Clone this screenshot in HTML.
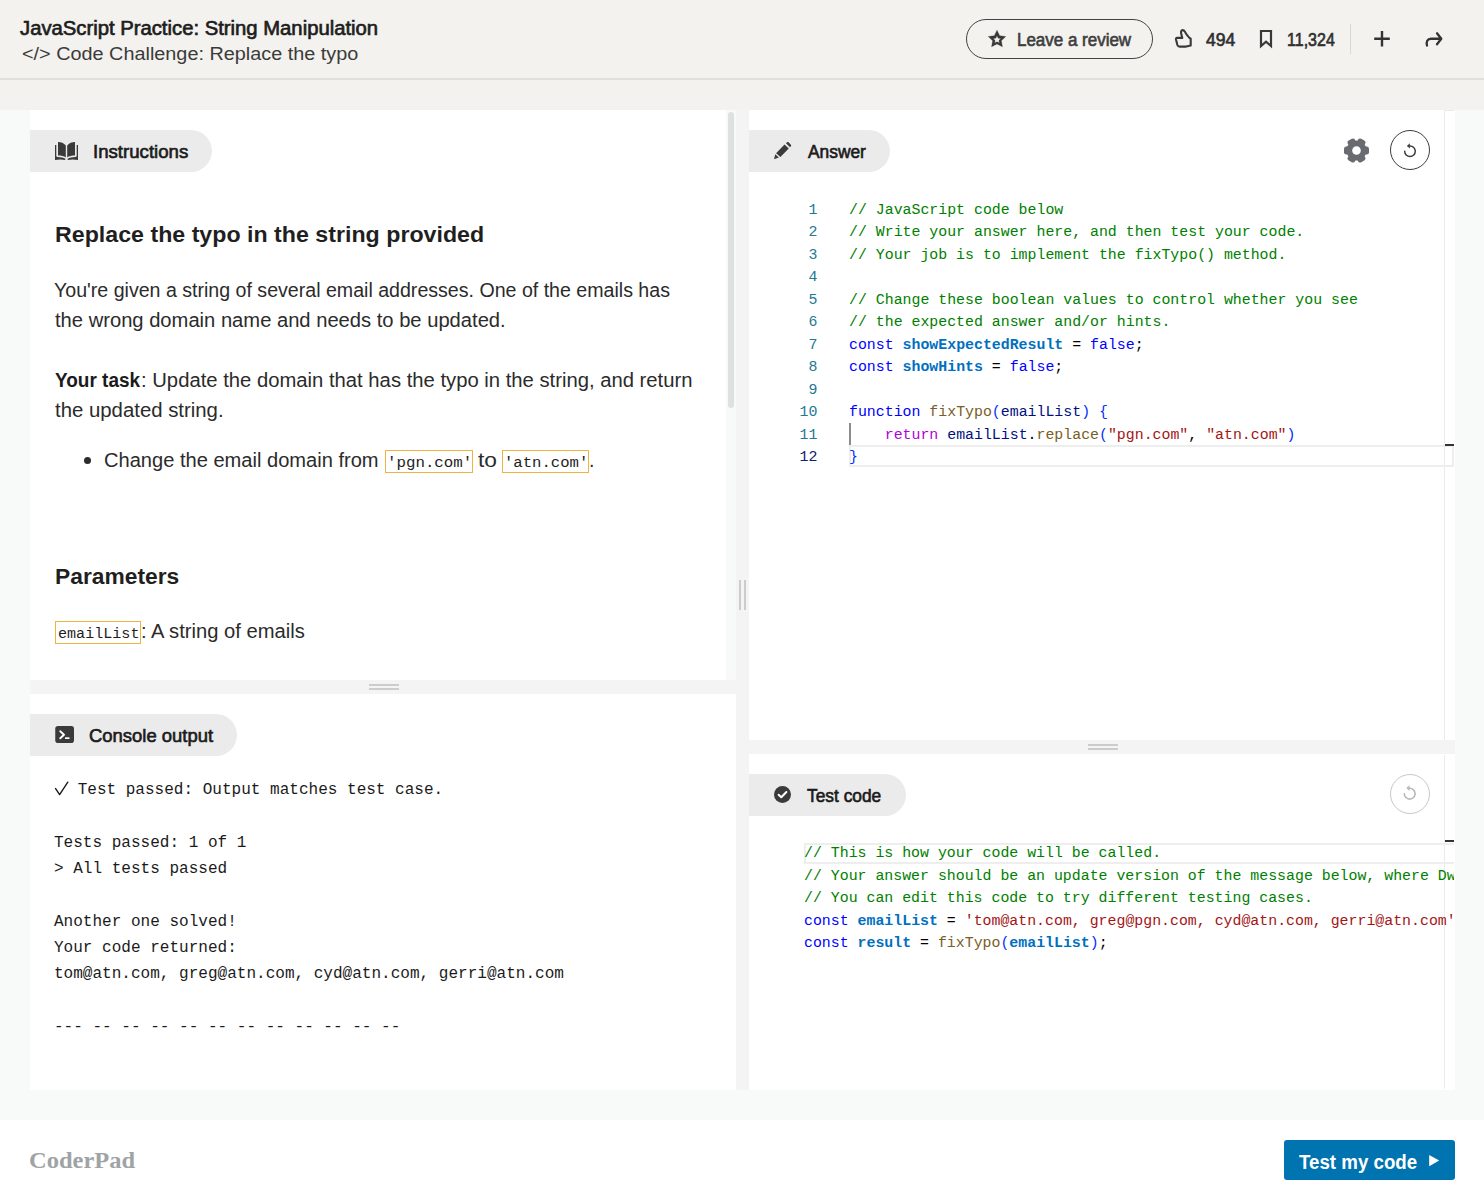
<!DOCTYPE html>
<html><head><meta charset="utf-8"><style>
html,body{margin:0;padding:0;width:1484px;height:1199px;overflow:hidden;background:#fff;}
body>div{position:absolute;}
.t{white-space:pre;}
</style></head><body>
<div style="left:0px;top:0px;width:1484px;height:110px;background:#f3f2ef;"></div>
<div style="left:0px;top:78px;width:1484px;height:2px;background:#e0dfdc;"></div>
<div style="left:0px;top:110px;width:1484px;height:1010px;background:#f8f9f9;"></div>
<div style="left:0px;top:1120px;width:1484px;height:79px;background:#ffffff;"></div>
<div style="left:30px;top:110px;width:696px;height:570px;background:#ffffff;"></div>
<div style="left:728px;top:112px;width:6px;height:296px;background:#dfe0e0;border-radius:3px;"></div>
<div style="left:30px;top:680px;width:706px;height:14px;background:#f4f4f4;"></div>
<div style="left:369px;top:684px;width:30px;height:2px;background:#cccccc;"></div>
<div style="left:369px;top:688px;width:30px;height:2px;background:#cccccc;"></div>
<div style="left:30px;top:694px;width:706px;height:396px;background:#ffffff;"></div>
<div style="left:736px;top:110px;width:13px;height:980px;background:#f4f4f4;"></div>
<div style="left:739px;top:580px;width:2px;height:30px;background:#cccccc;"></div>
<div style="left:744px;top:580px;width:2px;height:30px;background:#cccccc;"></div>
<div style="left:749px;top:110px;width:706px;height:630px;background:#ffffff;"></div>
<div style="left:1444px;top:110px;width:1px;height:630px;background:#ebebeb;"></div>
<div style="left:1444px;top:110px;width:10px;height:1px;background:#ebebeb;"></div>
<div style="left:749px;top:740px;width:706px;height:14px;background:#f4f4f4;"></div>
<div style="left:1088px;top:744px;width:30px;height:2px;background:#cccccc;"></div>
<div style="left:1088px;top:748px;width:30px;height:2px;background:#cccccc;"></div>
<div style="left:749px;top:754px;width:706px;height:336px;background:#ffffff;"></div>
<div style="left:1444px;top:755px;width:1px;height:334px;background:#ebebeb;"></div>
<div class="t" style="left:20.00px;top:17.35px;font-size:19.5px;line-height:23.40px;font-family:'Liberation Sans', sans-serif;font-weight:400;color:#1d1d1d;letter-spacing:0.000px;-webkit-text-stroke:0.65px currentColor;transform:scaleX(1.0390);transform-origin:0 0;">JavaScript Practice: String Manipulation</div>
<div class="t" style="left:21.67px;top:43.76px;font-size:17.5px;line-height:21.00px;font-family:'Liberation Sans', sans-serif;font-weight:400;color:#3b3b3a;letter-spacing:0.000px;transform:scaleX(1.1332);transform-origin:0 0;">&lt;/&gt; Code Challenge: Replace the typo</div>
<div style="left:966px;top:19px;width:187px;height:40px;background:transparent;border:1.25px solid #434343;border-radius:20px;box-sizing:border-box;"></div>
<svg style="position:absolute;left:982px;top:24px;" width="30" height="30" viewBox="0 0 30 30"><path d="M15.00,6.20 L17.70,11.68 L23.75,12.56 L19.37,16.82 L20.41,22.84 L15.00,20.00 L9.59,22.84 L10.63,16.82 L6.25,12.56 L12.30,11.68 Z M15.00,11.80 L16.18,14.18 L18.80,14.56 L16.90,16.42 L17.35,19.04 L15.00,17.80 L12.65,19.04 L13.10,16.42 L11.20,14.56 L13.82,14.18 Z" fill="#383838" fill-rule="evenodd" stroke="#383838" stroke-width="0.3" stroke-linejoin="round"/></svg>
<div class="t" style="left:1017.10px;top:29.03px;font-size:18.75px;line-height:22.50px;font-family:'Liberation Sans', sans-serif;font-weight:400;color:#3e3e3e;letter-spacing:0.000px;-webkit-text-stroke:0.65px currentColor;transform:scaleX(0.9048);transform-origin:0 0;">Leave a review</div>
<svg style="position:absolute;left:1170px;top:24px;" width="30" height="30" viewBox="0 0 30 30"><path d="M12.6,6.1 C11.2,6.1 10.9,7.8 11.1,9.3 L12.3,13.9 L7,13.9 C6.1,13.9 5.8,14.7 6,15.6 L7.4,21 C7.8,22.1 8.7,22.6 9.7,22.6 L16.2,22.6 L20.7,21.6 L20.7,14.7 L19.4,13.9 C17.4,11.8 15.7,9.5 14.7,7.4 C14.2,6.5 13.5,6.1 12.6,6.1 Z" fill="none" stroke="#383838" stroke-width="2.1" stroke-linejoin="round"/></svg>
<div class="t" style="left:1206.00px;top:29.03px;font-size:18.75px;line-height:22.50px;font-family:'Liberation Sans', sans-serif;font-weight:400;color:#2f2f2f;letter-spacing:0.000px;-webkit-text-stroke:0.65px currentColor;transform:scaleX(0.9355);transform-origin:0 0;">494</div>
<svg style="position:absolute;left:1256px;top:26px;" width="20" height="24" viewBox="0 0 20 24"><path d="M5,5 L15,5 L15,20 L10,15.6 L5,20 Z" fill="none" stroke="#383838" stroke-width="2.2" stroke-linejoin="miter"/></svg>
<div class="t" style="left:1287.15px;top:29.03px;font-size:18.75px;line-height:22.50px;font-family:'Liberation Sans', sans-serif;font-weight:400;color:#2f2f2f;letter-spacing:0.000px;-webkit-text-stroke:0.65px currentColor;transform:scaleX(0.8545);transform-origin:0 0;">11,324</div>
<div style="left:1350px;top:24px;width:1px;height:30px;background:#d9d8d5;"></div>
<svg style="position:absolute;left:1370px;top:27px;" width="24" height="24" viewBox="0 0 24 24"><path d="M12,4 L12,19.5 M4.2,11.8 L19.8,11.8" stroke="#333" stroke-width="2.4" fill="none"/></svg>
<svg style="position:absolute;left:1420px;top:24px;" width="30" height="30" viewBox="0 0 30 30"><path d="M7,21.5 C6,18 7.3,14.75 11,14.75 L21,14.75 M17,9.3 L21.3,14.75 L17,20.3" fill="none" stroke="#333" stroke-width="2.3" stroke-linecap="round" stroke-linejoin="round"/></svg>
<div style="left:30px;top:130px;width:182px;height:42px;background:#ebebeb;border-radius:0 21px 21px 0;"></div>
<svg style="position:absolute;left:55px;top:142px;" width="23" height="18" viewBox="0 0 23 18"><g fill="#3a3a3a"><path d="M3,0 C6,0 9,1.2 10.8,3.4 L10.8,15.6 C9,14.2 6,13.6 3,13.6 Z"/><path d="M20,0 C17,0 14,1.2 12.2,3.4 L12.2,15.6 C14,14.2 17,13.6 20,13.6 Z"/><path d="M0,3 L1.3,3 L1.3,13.8 Q1.3,15.1 2.6,15.1 C6,15.2 8.5,15.8 10.3,16.7 L10.3,17.9 C7,17.2 3.5,17.2 0,17.9 Z"/><path d="M23,3 L21.7,3 L21.7,13.8 Q21.7,15.1 20.4,15.1 C17,15.2 14.5,15.8 12.7,16.7 L12.7,17.9 C16,17.2 19.5,17.2 23,17.9 Z"/></g></svg>
<div class="t" style="left:92.61px;top:141.03px;font-size:18.75px;line-height:22.50px;font-family:'Liberation Sans', sans-serif;font-weight:400;color:#1b1b1b;letter-spacing:0.000px;-webkit-text-stroke:0.65px currentColor;transform:scaleX(0.9935);transform-origin:0 0;">Instructions</div>
<div class="t" style="left:55.44px;top:221.87px;font-size:21.9px;line-height:26.28px;font-family:'Liberation Sans', sans-serif;font-weight:700;color:#1f1f1f;letter-spacing:0.000px;transform:scaleX(1.0596);transform-origin:0 0;">Replace the typo in the string provided</div>
<div class="t" style="left:54.40px;top:279.25px;font-size:19.5px;line-height:23.40px;font-family:'Liberation Sans', sans-serif;font-weight:400;color:#2b2b2b;letter-spacing:0.000px;transform:scaleX(1.0044);transform-origin:0 0;">You&#x27;re given a string of several email addresses. One of the emails has</div>
<div class="t" style="left:55.40px;top:309.25px;font-size:19.5px;line-height:23.40px;font-family:'Liberation Sans', sans-serif;font-weight:400;color:#2b2b2b;letter-spacing:0.000px;transform:scaleX(1.0341);transform-origin:0 0;">the wrong domain name and needs to be updated.</div>
<div class="t" style="left:55.40px;top:369.15px;font-size:19.5px;line-height:23.40px;font-family:'Liberation Sans', sans-serif;font-weight:700;color:#1b1b1b;letter-spacing:0.000px;transform:scaleX(0.9727);transform-origin:0 0;">Your task</div>
<div class="t" style="left:140.52px;top:369.15px;font-size:19.5px;line-height:23.40px;font-family:'Liberation Sans', sans-serif;font-weight:400;color:#2b2b2b;letter-spacing:0.000px;transform:scaleX(1.0383);transform-origin:0 0;">: Update the domain that has the typo in the string, and return</div>
<div class="t" style="left:55.40px;top:398.95px;font-size:19.5px;line-height:23.40px;font-family:'Liberation Sans', sans-serif;font-weight:400;color:#2b2b2b;letter-spacing:0.000px;transform:scaleX(1.0437);transform-origin:0 0;">the updated string.</div>
<div style="left:84px;top:457px;width:7px;height:7px;background:#2b2b2b;border-radius:50%;"></div>
<div class="t" style="left:104.27px;top:448.85px;font-size:19.5px;line-height:23.40px;font-family:'Liberation Sans', sans-serif;font-weight:400;color:#2b2b2b;letter-spacing:0.000px;transform:scaleX(1.0298);transform-origin:0 0;">Change the email domain from</div>
<div style="left:385px;top:450px;width:87.5px;height:23px;background:transparent;border:1.25px solid #efb340;box-sizing:border-box;"></div>
<div class="t" style="left:386.76px;top:454.91px;font-size:14.88px;line-height:17.86px;font-family:'Liberation Mono', monospace;font-weight:400;color:#1e1e1e;letter-spacing:0.000px;transform:scaleX(1.0611);transform-origin:0 0;">&#x27;pgn.com&#x27;</div>
<div class="t" style="left:478.00px;top:448.85px;font-size:19.5px;line-height:23.40px;font-family:'Liberation Sans', sans-serif;font-weight:400;color:#2b2b2b;letter-spacing:0.000px;transform:scaleX(1.1667);transform-origin:0 0;">to</div>
<div style="left:502.3px;top:450px;width:86.30000000000001px;height:23px;background:transparent;border:1.25px solid #efb340;box-sizing:border-box;"></div>
<div class="t" style="left:503.80px;top:454.91px;font-size:14.88px;line-height:17.86px;font-family:'Liberation Mono', monospace;font-weight:400;color:#1e1e1e;letter-spacing:0.000px;transform:scaleX(1.0500);transform-origin:0 0;">&#x27;atn.com&#x27;</div>
<div class="t" style="left:589.00px;top:448.85px;font-size:19.5px;line-height:23.40px;font-family:'Liberation Sans', sans-serif;font-weight:400;color:#2b2b2b;letter-spacing:0.000px;">.</div>
<div class="t" style="left:55.36px;top:563.87px;font-size:21.9px;line-height:26.28px;font-family:'Liberation Sans', sans-serif;font-weight:700;color:#1f1f1f;letter-spacing:0.000px;transform:scaleX(1.0419);transform-origin:0 0;">Parameters</div>
<div style="left:55.1px;top:621.4px;width:86.4px;height:23.100000000000023px;background:transparent;border:1.25px solid #efb340;box-sizing:border-box;"></div>
<div class="t" style="left:58.09px;top:625.91px;font-size:14.88px;line-height:17.86px;font-family:'Liberation Mono', monospace;font-weight:400;color:#1e1e1e;letter-spacing:0.000px;transform:scaleX(1.0141);transform-origin:0 0;">emailList</div>
<div class="t" style="left:141.13px;top:620.15px;font-size:19.5px;line-height:23.40px;font-family:'Liberation Sans', sans-serif;font-weight:400;color:#2b2b2b;letter-spacing:0.000px;transform:scaleX(1.0353);transform-origin:0 0;">: A string of emails</div>
<div style="left:30px;top:714px;width:207px;height:42px;background:#ebebeb;border-radius:0 21px 21px 0;"></div>
<svg style="position:absolute;left:55px;top:726px;" width="19" height="17" viewBox="0 0 19 17"><rect x="0.25" y="0" width="18.75" height="17" rx="2.8" fill="#3a3a3a"/><path d="M5.25,5.25 L9,8.75 L5.25,12.25" fill="none" stroke="#fff" stroke-width="1.9" stroke-linecap="round" stroke-linejoin="round"/><rect x="10" y="11.3" width="4.5" height="1.7" fill="#fff"/></svg>
<div class="t" style="left:89.02px;top:725.03px;font-size:18.75px;line-height:22.50px;font-family:'Liberation Sans', sans-serif;font-weight:400;color:#1b1b1b;letter-spacing:0.000px;-webkit-text-stroke:0.65px currentColor;transform:scaleX(0.9840);transform-origin:0 0;">Console output</div>
<div class="t" style="left:77.65px;top:781.25px;font-size:16.04px;line-height:19.25px;font-family:'Liberation Mono', monospace;font-weight:400;color:#1b1b1b;letter-spacing:0.000px;">Test passed: Output matches test case.</div>
<div class="t" style="left:54.00px;top:833.75px;font-size:16.04px;line-height:19.25px;font-family:'Liberation Mono', monospace;font-weight:400;color:#1b1b1b;letter-spacing:0.000px;">Tests passed: 1 of 1</div>
<div class="t" style="left:54.00px;top:860.00px;font-size:16.04px;line-height:19.25px;font-family:'Liberation Mono', monospace;font-weight:400;color:#1b1b1b;letter-spacing:0.000px;">&gt; All tests passed</div>
<div class="t" style="left:54.00px;top:912.50px;font-size:16.04px;line-height:19.25px;font-family:'Liberation Mono', monospace;font-weight:400;color:#1b1b1b;letter-spacing:0.000px;">Another one solved!</div>
<div class="t" style="left:54.00px;top:938.75px;font-size:16.04px;line-height:19.25px;font-family:'Liberation Mono', monospace;font-weight:400;color:#1b1b1b;letter-spacing:0.000px;">Your code returned:</div>
<div class="t" style="left:54.00px;top:965.00px;font-size:16.04px;line-height:19.25px;font-family:'Liberation Mono', monospace;font-weight:400;color:#1b1b1b;letter-spacing:0.000px;">tom@atn.com, greg@atn.com, cyd@atn.com, gerri@atn.com</div>
<div class="t" style="left:54.00px;top:1017.50px;font-size:16.04px;line-height:19.25px;font-family:'Liberation Mono', monospace;font-weight:400;color:#1b1b1b;letter-spacing:0.000px;">--- -- -- -- -- -- -- -- -- -- -- --</div>
<svg style="position:absolute;left:50px;top:778px;" width="22" height="20" viewBox="0 0 22 20"><path d="M5.6,10.6 L9.6,16.6 L17.8,4.2" fill="none" stroke="#1b1b1b" stroke-width="1.4" stroke-linecap="round" stroke-linejoin="round"/></svg>
<div style="left:749px;top:130px;width:141px;height:42px;background:#ebebeb;border-radius:0 21px 21px 0;"></div>
<svg style="position:absolute;left:766px;top:136px;" width="34" height="30" viewBox="0 0 34 30"><g fill="#3a3a3a"><path d="M8,23.3 L9.25,18.25 L12.9,21.5 Z"/><path d="M10.1,17.25 L18.5,8.5 L22.75,12.5 L14.4,21 Z"/><path d="M20,7.25 L21,6.2 Q21.75,5.6 22.6,6.3 L24.9,8.7 Q25.5,9.5 24.9,10.3 L24,11.25 Z"/></g></svg>
<div class="t" style="left:807.60px;top:141.43px;font-size:18.75px;line-height:22.50px;font-family:'Liberation Sans', sans-serif;font-weight:400;color:#1b1b1b;letter-spacing:0.000px;-webkit-text-stroke:0.65px currentColor;transform:scaleX(0.9258);transform-origin:0 0;">Answer</div>
<svg style="position:absolute;left:1344px;top:138px;" width="25" height="25" viewBox="0 0 25 25"><g fill="#696b70" transform="translate(12.5,12.5)"><circle r="10.1"/><rect x="-4.1" y="-12.5" width="8.2" height="8" rx="2.4" transform="rotate(30)"/><rect x="-4.1" y="-12.5" width="8.2" height="8" rx="2.4" transform="rotate(90)"/><rect x="-4.1" y="-12.5" width="8.2" height="8" rx="2.4" transform="rotate(150)"/><rect x="-4.1" y="-12.5" width="8.2" height="8" rx="2.4" transform="rotate(210)"/><rect x="-4.1" y="-12.5" width="8.2" height="8" rx="2.4" transform="rotate(270)"/><rect x="-4.1" y="-12.5" width="8.2" height="8" rx="2.4" transform="rotate(330)"/></g><circle cx="12.5" cy="12.5" r="4.3" fill="#fff"/></svg>
<div style="left:1390px;top:130px;width:40px;height:40px;background:transparent;border:1.25px solid #3d3d3d;border-radius:50%;box-sizing:border-box;"></div>
<svg style="position:absolute;left:1396px;top:136px;" width="28" height="28" viewBox="0 0 28 28"><path d="M8.7,15.3 A5.3,5.3 0 1 0 14,10" fill="none" stroke="#3d3d3d" stroke-width="1.5" stroke-linecap="round"/><path d="M10.8,9.9 L13.9,7.2 L13.9,12.6 Z" fill="#3d3d3d"/></svg>
<div style="left:849px;top:444.8px;width:605px;height:22.0px;background:transparent;border:2px solid #eeeeee;border-right-width:2px;box-sizing:border-box;"></div>
<div style="left:1445px;top:444px;width:9px;height:2px;background:#333333;"></div>
<div style="left:849px;top:423px;width:2px;height:22px;background:#8c8c8c;"></div>
<div class="t" style="left:808.60px;top:201.91px;font-size:14.88px;line-height:17.86px;font-family:'Liberation Mono', monospace;font-weight:400;color:#237893;letter-spacing:0.000px;">1</div>
<div class="t" style="left:849.00px;top:201.91px;font-size:14.88px;line-height:17.86px;font-family:'Liberation Mono', monospace;font-weight:400;color:#000;letter-spacing:0.000px;"><span style="color:#008000;">// JavaScript code below</span></div>
<div class="t" style="left:808.60px;top:224.41px;font-size:14.88px;line-height:17.86px;font-family:'Liberation Mono', monospace;font-weight:400;color:#237893;letter-spacing:0.000px;">2</div>
<div class="t" style="left:849.00px;top:224.41px;font-size:14.88px;line-height:17.86px;font-family:'Liberation Mono', monospace;font-weight:400;color:#000;letter-spacing:0.000px;"><span style="color:#008000;">// Write your answer here, and then test your code.</span></div>
<div class="t" style="left:808.60px;top:246.91px;font-size:14.88px;line-height:17.86px;font-family:'Liberation Mono', monospace;font-weight:400;color:#237893;letter-spacing:0.000px;">3</div>
<div class="t" style="left:849.00px;top:246.91px;font-size:14.88px;line-height:17.86px;font-family:'Liberation Mono', monospace;font-weight:400;color:#000;letter-spacing:0.000px;"><span style="color:#008000;">// Your job is to implement the fixTypo() method.</span></div>
<div class="t" style="left:808.60px;top:269.41px;font-size:14.88px;line-height:17.86px;font-family:'Liberation Mono', monospace;font-weight:400;color:#237893;letter-spacing:0.000px;">4</div>
<div class="t" style="left:808.60px;top:291.91px;font-size:14.88px;line-height:17.86px;font-family:'Liberation Mono', monospace;font-weight:400;color:#237893;letter-spacing:0.000px;">5</div>
<div class="t" style="left:849.00px;top:291.91px;font-size:14.88px;line-height:17.86px;font-family:'Liberation Mono', monospace;font-weight:400;color:#000;letter-spacing:0.000px;"><span style="color:#008000;">// Change these boolean values to control whether you see</span></div>
<div class="t" style="left:808.60px;top:314.41px;font-size:14.88px;line-height:17.86px;font-family:'Liberation Mono', monospace;font-weight:400;color:#237893;letter-spacing:0.000px;">6</div>
<div class="t" style="left:849.00px;top:314.41px;font-size:14.88px;line-height:17.86px;font-family:'Liberation Mono', monospace;font-weight:400;color:#000;letter-spacing:0.000px;"><span style="color:#008000;">// the expected answer and/or hints.</span></div>
<div class="t" style="left:808.60px;top:336.91px;font-size:14.88px;line-height:17.86px;font-family:'Liberation Mono', monospace;font-weight:400;color:#237893;letter-spacing:0.000px;">7</div>
<div class="t" style="left:849.00px;top:336.91px;font-size:14.88px;line-height:17.86px;font-family:'Liberation Mono', monospace;font-weight:400;color:#000;letter-spacing:0.000px;"><span style="color:#0000ff;">const</span> <span style="color:#0070c1;font-weight:700;">showExpectedResult</span> = <span style="color:#0000ff;">false</span>;</div>
<div class="t" style="left:808.60px;top:359.41px;font-size:14.88px;line-height:17.86px;font-family:'Liberation Mono', monospace;font-weight:400;color:#237893;letter-spacing:0.000px;">8</div>
<div class="t" style="left:849.00px;top:359.41px;font-size:14.88px;line-height:17.86px;font-family:'Liberation Mono', monospace;font-weight:400;color:#000;letter-spacing:0.000px;"><span style="color:#0000ff;">const</span> <span style="color:#0070c1;font-weight:700;">showHints</span> = <span style="color:#0000ff;">false</span>;</div>
<div class="t" style="left:808.60px;top:381.91px;font-size:14.88px;line-height:17.86px;font-family:'Liberation Mono', monospace;font-weight:400;color:#237893;letter-spacing:0.000px;">9</div>
<div class="t" style="left:799.60px;top:404.41px;font-size:14.88px;line-height:17.86px;font-family:'Liberation Mono', monospace;font-weight:400;color:#237893;letter-spacing:0.000px;">10</div>
<div class="t" style="left:849.00px;top:404.41px;font-size:14.88px;line-height:17.86px;font-family:'Liberation Mono', monospace;font-weight:400;color:#000;letter-spacing:0.000px;"><span style="color:#0000ff;">function</span> <span style="color:#795e26;">fixTypo</span><span style="color:#0431fa;">(</span><span style="color:#001080;">emailList</span><span style="color:#0431fa;">)</span> <span style="color:#0431fa;">{</span></div>
<div class="t" style="left:799.60px;top:426.91px;font-size:14.88px;line-height:17.86px;font-family:'Liberation Mono', monospace;font-weight:400;color:#237893;letter-spacing:0.000px;">11</div>
<div class="t" style="left:849.00px;top:426.91px;font-size:14.88px;line-height:17.86px;font-family:'Liberation Mono', monospace;font-weight:400;color:#000;letter-spacing:0.000px;">    <span style="color:#af00db;">return</span> <span style="color:#001080;">emailList</span>.<span style="color:#795e26;">replace</span><span style="color:#0431fa;">(</span><span style="color:#a31515;">&quot;pgn.com&quot;</span>, <span style="color:#a31515;">&quot;atn.com&quot;</span><span style="color:#0431fa;">)</span></div>
<div class="t" style="left:799.60px;top:449.41px;font-size:14.88px;line-height:17.86px;font-family:'Liberation Mono', monospace;font-weight:400;color:#0b216f;letter-spacing:0.000px;">12</div>
<div class="t" style="left:849.00px;top:449.41px;font-size:14.88px;line-height:17.86px;font-family:'Liberation Mono', monospace;font-weight:400;color:#000;letter-spacing:0.000px;"><span style="color:#0431fa;">}</span></div>
<div style="left:749px;top:774px;width:157px;height:42px;background:#ebebeb;border-radius:0 21px 21px 0;"></div>
<svg style="position:absolute;left:774px;top:786px;" width="17" height="17" viewBox="0 0 17 17"><circle cx="8.5" cy="8.5" r="8.5" fill="#3a3a3a"/><path d="M4.6,8.7 L7.3,11.3 L12.4,6" fill="none" stroke="#fff" stroke-width="2" stroke-linecap="round" stroke-linejoin="round"/></svg>
<div class="t" style="left:807.00px;top:785.03px;font-size:18.75px;line-height:22.50px;font-family:'Liberation Sans', sans-serif;font-weight:400;color:#1b1b1b;letter-spacing:0.000px;-webkit-text-stroke:0.65px currentColor;transform:scaleX(0.9250);transform-origin:0 0;">Test code</div>
<div style="left:1390px;top:774px;width:40px;height:40px;background:transparent;border:1px solid #c8c8c8;border-radius:50%;box-sizing:border-box;"></div>
<svg style="position:absolute;left:1390px;top:774px;" width="40" height="40" viewBox="0 0 40 40"><path d="M14.3,19.7 A5.4,5.4 0 1 0 19.7,14.3" fill="none" stroke="#b8b8b8" stroke-width="1.6" stroke-linecap="round"/><path d="M16.3,14.1 L19.5,11.3 L19.5,17.1 Z" fill="#b8b8b8"/></svg>
<div style="left:803.7px;top:842.8px;width:650.3px;height:21.200000000000045px;background:transparent;border:2px solid #eeeeee;border-right:none;box-sizing:border-box;"></div>
<div style="left:1445px;top:840px;width:9px;height:2px;background:#333333;"></div>
<div style="left:749px;top:820px;width:705px;height:200px;overflow:hidden;">
<div class="t" style="position:absolute;left:55px;top:25.21px;font-size:14.88px;line-height:17.86px;font-family:'Liberation Mono', monospace;color:#000;"><span style="color:#008000;">// This is how your code will be called.</span></div>
<div class="t" style="position:absolute;left:55px;top:47.71px;font-size:14.88px;line-height:17.86px;font-family:'Liberation Mono', monospace;color:#000;"><span style="color:#008000;">// Your answer should be an update version of the message below, where Dwight</span></div>
<div class="t" style="position:absolute;left:55px;top:70.21px;font-size:14.88px;line-height:17.86px;font-family:'Liberation Mono', monospace;color:#000;"><span style="color:#008000;">// You can edit this code to try different testing cases.</span></div>
<div class="t" style="position:absolute;left:55px;top:92.71px;font-size:14.88px;line-height:17.86px;font-family:'Liberation Mono', monospace;color:#000;"><span style="color:#0000ff;">const</span> <span style="color:#0070c1;font-weight:700;">emailList</span> = <span style="color:#a31515;">&#x27;tom@atn.com, greg@pgn.com, cyd@atn.com, gerri@atn.com&#x27;;</span></div>
<div class="t" style="position:absolute;left:55px;top:115.21px;font-size:14.88px;line-height:17.86px;font-family:'Liberation Mono', monospace;color:#000;"><span style="color:#0000ff;">const</span> <span style="color:#0070c1;font-weight:700;">result</span> = <span style="color:#795e26;">fixTypo</span><span style="color:#0431fa;">(</span><span style="color:#0070c1;font-weight:700;">emailList</span><span style="color:#0431fa;">)</span>;</div>
</div>
<div class="t" style="left:28.56px;top:1145.86px;font-size:23.5px;line-height:28.20px;font-family:'Liberation Serif', serif;font-weight:700;color:#a0a3a6;letter-spacing:0.000px;transform:scaleX(1.0416);transform-origin:0 0;">CoderPad</div>
<div style="left:1284px;top:1140px;width:171px;height:40px;background:#0073b1;border-radius:3px;"></div>
<div class="t" style="left:1299.00px;top:1151.35px;font-size:19.5px;line-height:23.40px;font-family:'Liberation Sans', sans-serif;font-weight:700;color:#ffffff;letter-spacing:0.000px;transform:scaleX(0.9593);transform-origin:0 0;">Test my code</div>
<svg style="position:absolute;left:1426px;top:1152px;" width="16" height="18" viewBox="0 0 16 18"><path d="M3.2,3 L13.2,8.6 L3.2,14.2 Z" fill="#fff"/></svg>
</body></html>
